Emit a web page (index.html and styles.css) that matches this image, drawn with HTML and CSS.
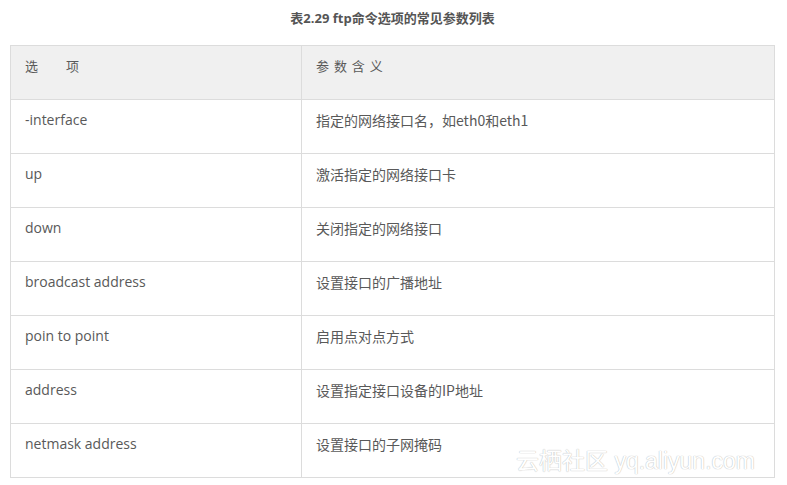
FILE: index.html
```html
<!DOCTYPE html>
<html lang="zh">
<head>
<meta charset="utf-8">
<link rel="stylesheet" href="styles.css">
</head>
<body>
<div class="page">
  <div class="caption">表2.29 ftp命令选项的常见参数列表</div>
  <table class="params">
    <thead>
      <tr><th class="c1 hd-opt">选<span class="gap"></span>项</th><th class="c2 hd-mean">参 数 含 义</th></tr>
    </thead>
    <tbody>
      <tr><td class="c1">-interface</td><td class="c2">指定的网络接口名，如eth0和eth1</td></tr>
      <tr><td class="c1">up</td><td class="c2">激活指定的网络接口卡</td></tr>
      <tr><td class="c1">down</td><td class="c2">关闭指定的网络接口</td></tr>
      <tr><td class="c1">broadcast address</td><td class="c2">设置接口的广播地址</td></tr>
      <tr><td class="c1">poin to point</td><td class="c2">启用点对点方式</td></tr>
      <tr><td class="c1">address</td><td class="c2">设置指定接口设备的IP地址</td></tr>
      <tr><td class="c1">netmask address</td><td class="c2">设置接口的子网掩码</td></tr>
    </tbody>
  </table>
  <div class="watermark">云栖社区 yq.aliyun.com</div>
</div>
</body>
</html>
```
FILE: styles.css
```css
html, body { margin: 0; padding: 0; background: #fff; }
.page {
  position: relative;
  width: 787px;
  height: 485px;
  padding: 0 0 0 10px;
  box-sizing: border-box;
  font-family: "Open Sans", "Noto Sans CJK SC", sans-serif;
  color: #595959;
}
.caption {
  width: 765px;
  text-align: center;
  font-family: "Open Sans", "Noto Sans CJK SC", sans-serif;
  font-weight: bold;
  font-size: 13px;
  line-height: 18px;
  padding-top: 9px;
  height: 45px;
  box-sizing: border-box;
  color: #555;
}
.params {
  border-collapse: collapse;
  width: 765px;
  table-layout: fixed;
}
.params tr { height: 54px; }
.params th, .params td {
  border: 1px solid #dcdcdc;
  padding: 10px 14px 0;
  vertical-align: top;
  text-align: left;
  font-weight: normal;
  line-height: 20px;
  color: #595959;
}
.params thead th { background: #f0f0f0; }
.params .c1 {
  width: 291px;
  box-sizing: border-box;
  font-family: "Open Sans", "Noto Sans CJK SC", sans-serif;
  font-size: 14px;
}
.params .c2 {
  font-family: "Noto Sans CJK SC", sans-serif;
  font-size: 14px;
}
.params .hd-opt { font-family: "Noto Sans CJK SC", sans-serif; font-size: 13px; }
.params .hd-mean { font-size: 13px; letter-spacing: 1px; }
.gap { display: inline-block; width: 28px; }
.watermark {
  position: absolute;
  left: 516px;
  top: 447px;
  font-family: "Liberation Sans", "Noto Sans CJK SC", sans-serif;
  font-size: 23px;
  line-height: 28px;
  color: #fff;
  text-shadow: 0 0 1px #bbb, 0 0 1px #ccc;
  white-space: nowrap;
}
```
